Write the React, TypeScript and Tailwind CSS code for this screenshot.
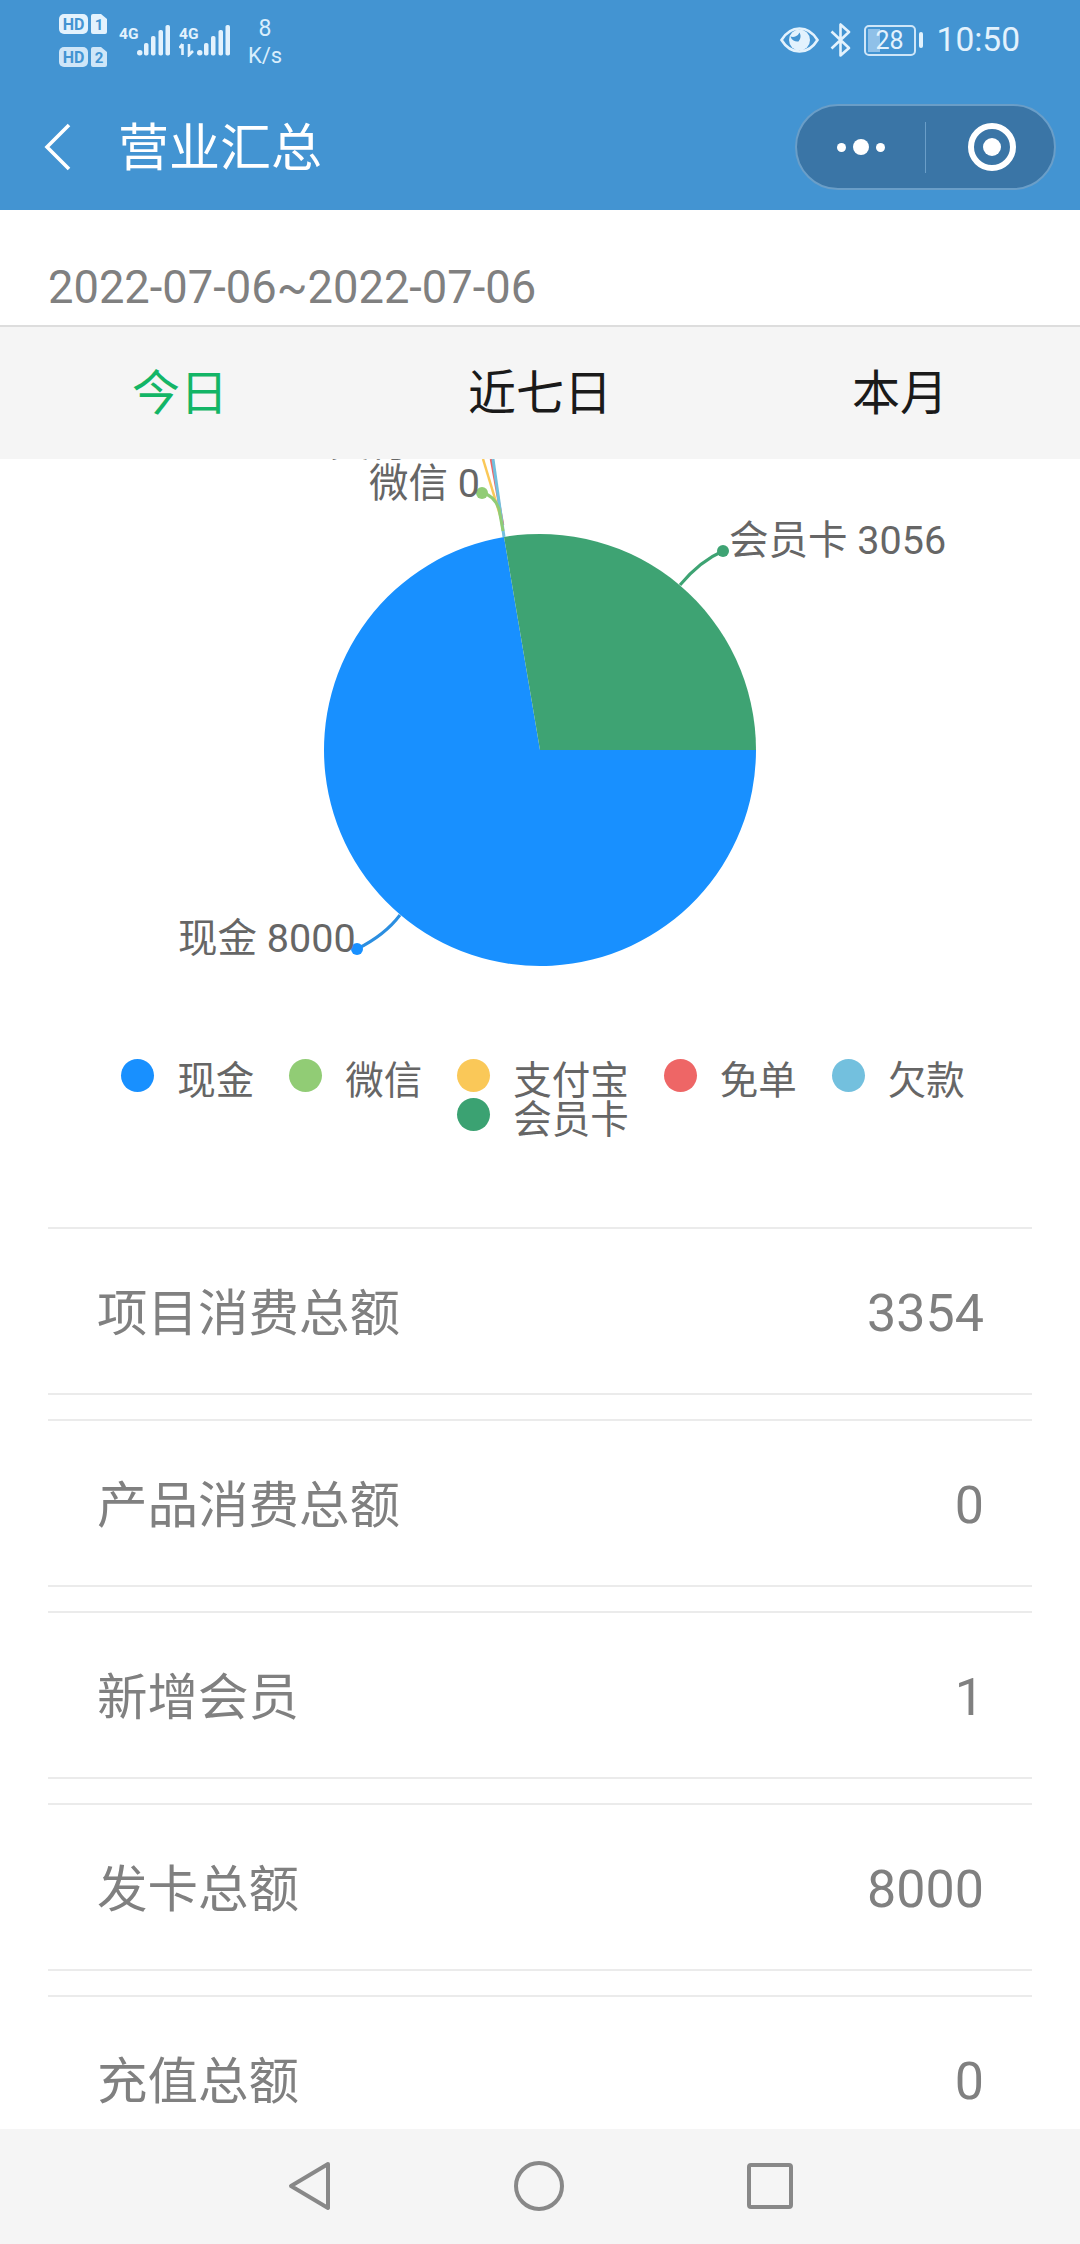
const legendItems = [
  { name: '现金', dot: 'bg-[#1890ff]' },
  { name: '微信', dot: 'bg-[#91cc75]' },
  { name: '支付宝', dot: 'bg-[#fac858]' },
  { name: '免单', dot: 'bg-[#ee6666]' },
  { name: '欠款', dot: 'bg-[#73c0de]' },
  { name: '会员卡', dot: 'bg-[#3ba272]' },
];

const summaryRows = [
  { label: '项目消费总额', value: '3354' },
  { label: '产品消费总额', value: '0' },
  { label: '新增会员', value: '1' },
  { label: '发卡总额', value: '8000' },
  { label: '充值总额', value: '0' },
];

function SimBadges() {
  return (
    <svg width="48" height="53" viewBox="0 0 48 53" className="shrink-0">
      <rect x="0" y="0" width="29" height="20" rx="5" fill="#e3f2fd" />
      <path d="M34 0 h8 l6 5 v13 a2 2 0 0 1 -2 2 h-12 a2 2 0 0 1 -2 -2 v-16 a2 2 0 0 1 2 -2 z" fill="#e3f2fd" />
      <text x="14.5" y="16" textAnchor="middle" fontSize="16" fontWeight="700" fill="#4394d2" fontFamily="Roboto">HD</text>
      <text x="40" y="16" textAnchor="middle" fontSize="15" fontWeight="700" fill="#4394d2" fontFamily="Roboto">1</text>
      <rect x="0" y="33" width="29" height="20" rx="5" fill="#cfe6f8" />
      <path d="M34 33 h8 l6 5 v13 a2 2 0 0 1 -2 2 h-12 a2 2 0 0 1 -2 -2 v-16 a2 2 0 0 1 2 -2 z" fill="#cfe6f8" />
      <text x="14.5" y="49" textAnchor="middle" fontSize="16" fontWeight="700" fill="#4394d2" fontFamily="Roboto">HD</text>
      <text x="40" y="49" textAnchor="middle" fontSize="15" fontWeight="700" fill="#4394d2" fontFamily="Roboto">2</text>
    </svg>
  );
}

function SignalBars({ arrows }: { arrows?: boolean }) {
  return (
    <svg width="52" height="32" viewBox="0 0 52 32" className="shrink-0">
      <text x="0" y="14" fontSize="15.5" fontWeight="700" fill="#e3f2fd" fontFamily="Roboto">4G</text>
      {arrows && <path d="M3.5 19 v11 M0.5 23 l3 -4 M10 19 v11 l4 -4" stroke="#e3f2fd" strokeWidth="2.6" fill="none" />}
      <g fill="#e3f2fd">
        <rect x="18" y="25" width="5.5" height="5.5" rx="2.7" />
        <rect x="25" y="18" width="4.5" height="12.5" rx="1.8" />
        <rect x="32" y="11" width="4.5" height="19.5" rx="1.8" />
        <rect x="39.5" y="5" width="4.5" height="25.5" rx="1.8" />
        <rect x="46.5" y="0" width="4.5" height="30.5" rx="1.8" />
      </g>
    </svg>
  );
}

function EyeIcon() {
  return (
    <svg width="39" height="26" viewBox="0 0 39 26" className="shrink-0">
      <path d="M1.5 13 C7 4 13 1.5 19.5 1.5 S32 4 37.5 13 C32 22 26 24.5 19.5 24.5 S7 22 1.5 13 Z" fill="none" stroke="#e3f2fd" strokeWidth="2.6" />
      <circle cx="19.5" cy="13" r="10.5" fill="#e3f2fd" />
      <path d="M10.5 9.5 a7 7 0 0 0 9 -4 a8 8 0 0 1 -1 9 a7 7 0 0 1 -8 -5 z" fill="#4394d2" />
    </svg>
  );
}

function BluetoothIcon() {
  return (
    <svg width="21" height="34" viewBox="0 0 21 34" className="shrink-0">
      <path d="M1.5 25.5 L19 9 L10.5 1.5 V32.5 L19 25 L1.5 8.5" fill="none" stroke="#e3f2fd" strokeWidth="2.6" strokeLinejoin="round" />
    </svg>
  );
}

function Battery() {
  return (
    <div className="flex items-center shrink-0">
      <div className="relative flex h-[31px] w-[52px] items-center justify-center overflow-hidden rounded-[5px] border-2 border-[#cfe6f8]">
        <div className="absolute bottom-[2px] left-[2px] top-[2px] w-[12px] bg-[#8fc0e8]" />
        <span className="relative text-[25px] leading-none text-[#e3f2fd]">28</span>
      </div>
      <div className="ml-[3px] h-[16px] w-[4px] rounded-sm bg-[#e3f2fd]" />
    </div>
  );
}

function StatusBar() {
  return (
    <div className="flex h-[84px] items-start pl-[59px] pr-[60px] pt-[14px]">
      <SimBadges />
      <div className="ml-[12px] mt-[11px]">
        <SignalBars />
      </div>
      <div className="ml-[8px] mt-[11px]">
        <SignalBars arrows />
      </div>
      <div className="ml-[16px] mt-[2px] flex w-[36px] flex-col items-center text-[#d9eefc]">
        <span className="text-[23px] leading-[26px]">8</span>
        <span className="text-[22px] leading-[27px]">K/s</span>
      </div>
      <div className="ml-auto mt-[9px] flex items-center">
        <EyeIcon />
        <div className="ml-[11px]">
          <BluetoothIcon />
        </div>
        <div className="ml-[13px]">
          <Battery />
        </div>
        <span className="ml-[14px] text-[33.5px] leading-[34px] text-[#e3f2fd]">10:50</span>
      </div>
    </div>
  );
}

function NavBar() {
  return (
    <div className="flex h-[126px] items-center pr-[24px]">
      <svg width="28" height="48" viewBox="0 0 28 48" className="ml-[44px] shrink-0">
        <polyline points="25,2 3,24 25,46" fill="none" stroke="#ffffff" strokeWidth="3.6" />
      </svg>
      <h1 className="ml-[46px] pt-[2px] text-[51px] font-normal leading-none text-white">营业汇总</h1>
      <div className="ml-auto flex h-[86px] w-[261px] items-center rounded-full border-2 border-[#6a9ec8] bg-[#3a75a6]">
        <div className="flex w-[128px] items-center justify-center gap-[7px]">
          <span className="h-[9px] w-[9px] rounded-full bg-white" />
          <span className="h-[16px] w-[16px] rounded-full bg-white" />
          <span className="h-[9px] w-[9px] rounded-full bg-white" />
        </div>
        <div className="h-[51px] w-px bg-[#6a9ec8]" />
        <div className="flex flex-1 items-center justify-center pl-[4px]">
          <span className="flex h-[48px] w-[48px] items-center justify-center rounded-full border-[6px] border-white">
            <span className="h-[18px] w-[18px] rounded-full bg-white" />
          </span>
        </div>
      </div>
    </div>
  );
}

// cash and member-card slices plus the zero-value leader lines
function PieChart() {
  return (
    <svg width="1080" height="600" viewBox="0 0 1080 600" className="block">
      <path d="M540 291 L756 291 A216 216 0 1 1 504 78 Z" fill="#1890ff" />
      <path d="M540 291 L504 78 A216 216 0 0 1 756 291 Z" fill="#3ea373" />

      <path d="M503 66 L483 0" stroke="#fac858" strokeWidth="2.5" fill="none" />
      <path d="M503 66 L491 0" stroke="#ee6666" strokeWidth="2.5" fill="none" />
      <path d="M504 78 L493 0" stroke="#73c0de" strokeWidth="3" fill="none" />
      <path d="M503 72 L499 50 Q494 36 482 34" stroke="#91cc75" strokeWidth="3" fill="none" />
      <circle cx="482" cy="34" r="6" fill="#91cc75" />

      <path d="M680 126 Q700 102 723 92" stroke="#3ea373" strokeWidth="3" fill="none" />
      <circle cx="723" cy="92" r="6" fill="#3ea373" />

      <path d="M400 456 Q385 476 357 490" stroke="#2b8ee0" strokeWidth="3" fill="none" />
      <circle cx="357" cy="490" r="6" fill="#1890ff" />

      <g fontSize="39.5" fill="#666666" fontFamily="Roboto, 'Noto Sans CJK SC', sans-serif">
        <text x="330" y="-3">支付宝 0</text>
        <text x="369" y="38">微信 0</text>
        <text x="729" y="95">会员卡 3056</text>
        <text x="178" y="493">现金 8000</text>
      </g>
    </svg>
  );
}

function Legend() {
  return (
    <div className="mx-auto flex w-[900px] flex-wrap justify-center gap-x-[35px] pl-[6px]">
      {legendItems.map((item) => (
        <div key={item.name} className="flex h-[39px] items-start">
          <span className={`h-[33px] w-[33px] rounded-full ${item.dot}`} />
          <span className="ml-[23px] pt-[2px] text-[38.5px] leading-[39px] text-[#666666]">{item.name}</span>
        </div>
      ))}
    </div>
  );
}

function SummaryRow({ label, value }: { label: string; value: string }) {
  return (
    <div className="flex h-[168px] shrink-0 items-center justify-between border-y-2 border-[#ebebeb] pl-[49px] pr-[48px] pt-[5px] text-[#808080]">
      <span className="text-[50.5px]">{label}</span>
      <span className="text-[52px]">{value}</span>
    </div>
  );
}

export default function App() {
  return (
    <div className="flex h-[2244px] w-[1080px] flex-col overflow-hidden bg-white font-[Roboto,'Noto_Sans_CJK_SC',sans-serif]">
      <header className="h-[210px] shrink-0 bg-[#4394d2]">
        <StatusBar />
        <NavBar />
      </header>

      <div className="h-[115px] shrink-0 pl-[48px] pt-[52px] text-[45.3px] leading-[52px] text-[#808080]">
        2022-07-06~2022-07-06
      </div>

      <div className="grid h-[134px] shrink-0 grid-cols-3 items-center border-t-2 border-[#dddddd] bg-[#f5f5f5] pt-[2px] text-center text-[48px] text-[#1a1a1a]">
        <span className="text-[#13b566]">今日</span>
        <span>近七日</span>
        <span>本月</span>
      </div>

      <main className="min-h-0 flex-1 overflow-hidden">
        <PieChart />
        <Legend />
        <div className="mt-[90px] flex flex-col gap-6 px-12">
          {summaryRows.map((row) => (
            <SummaryRow key={row.label} label={row.label} value={row.value} />
          ))}
        </div>
      </main>

      <nav className="flex h-[115px] shrink-0 items-center justify-center gap-[183px] bg-[#f5f5f5] pb-[1px]">
        <svg width="43" height="50" viewBox="0 0 43 50">
          <path d="M40 3 L3 25 L40 47 Z" fill="none" stroke="#888888" strokeWidth="4" strokeLinejoin="round" />
        </svg>
        <svg width="50" height="50" viewBox="0 0 50 50">
          <circle cx="25" cy="25" r="23" fill="none" stroke="#888888" strokeWidth="4" />
        </svg>
        <svg width="46" height="46" viewBox="0 0 46 46">
          <rect x="2" y="2" width="42" height="42" rx="2" fill="none" stroke="#888888" strokeWidth="4" />
        </svg>
      </nav>
    </div>
  );
}
